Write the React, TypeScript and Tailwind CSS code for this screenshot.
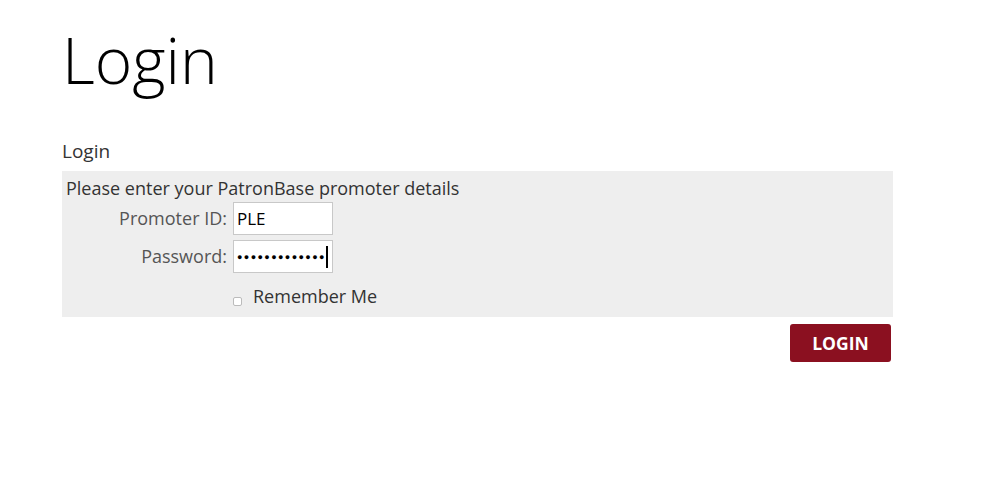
export default function App() {
  return (
    <div className="min-h-[498px] bg-white pl-[62px] pr-[105px] pt-[15px] text-[#333]" style={{ fontFamily: '"Open Sans", sans-serif' }}>
      <h1 className="text-[64px] font-light leading-[90px] text-black">Login</h1>
      <h2 className="mt-[34px] text-[19px] leading-[24px]">Login</h2>
      <div className="mt-[8px] flex h-[146px] flex-col bg-[#eeeeee] pl-[4px] pt-[6px]">
        <p className="text-[18px] leading-[22px]">Please enter your PatronBase promoter details</p>
        <div className="mt-[3px] grid grid-cols-[161px_100px] gap-x-[6px] gap-y-[5px]">
          <label className="flex items-center justify-end text-[18px] text-[#555]">Promoter ID:</label>
          <div className="flex h-[33px] items-center border border-[#c8c8c8] bg-white px-[3px] text-[17px] text-black">PLE</div>
          <label className="flex items-center justify-end text-[18px] text-[#555]">Password:</label>
          <div className="flex h-[33px] items-center border border-[#c8c8c8] bg-white pl-[3px] text-black">
            <span className="text-[9px] tracking-[1.4px]">●●●●●●●●●●●●●</span>
            <span className="h-[22px] w-[2px] bg-black" />
          </div>
          <div />
          <label className="mt-[5px] flex items-center gap-[11px] text-[18px] text-[#333]">
            <span className="mt-[9px] h-[9px] w-[9px] shrink-0 rounded-[2px] border border-[#bbb] bg-white" />
            <span className="whitespace-nowrap">Remember Me</span>
          </label>
        </div>
      </div>
      <div className="flex justify-end pr-[2px] pt-[7px]">
        <button className="h-[38px] w-[101px] rounded-[3px] bg-[#8b1020] text-[17.5px] font-bold text-white">LOGIN</button>
      </div>
    </div>
  );
}
